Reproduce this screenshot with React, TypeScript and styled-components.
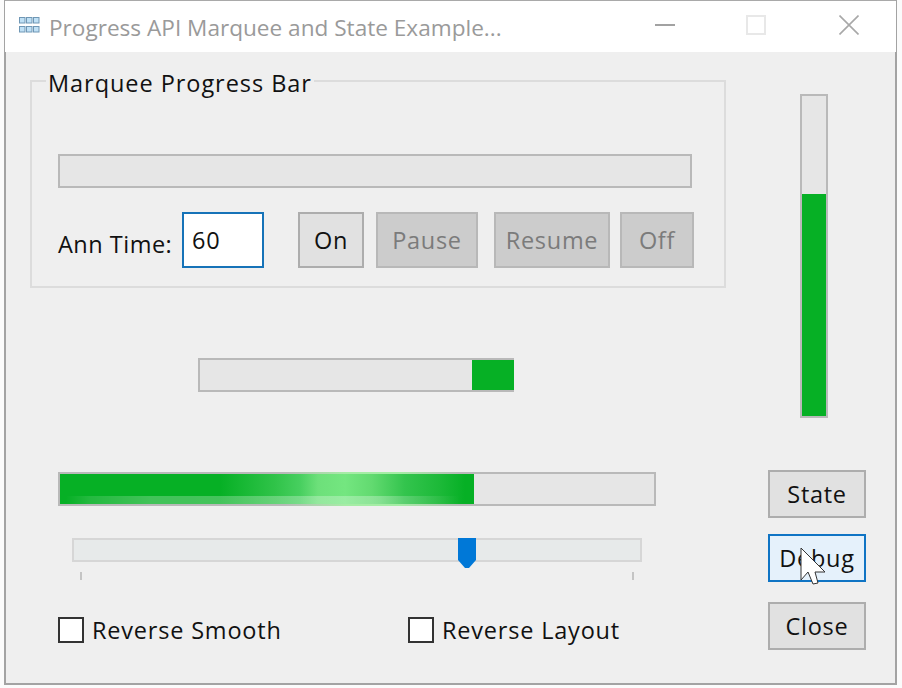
import React from "react";
import styled, { createGlobalStyle } from "styled-components";

const GlobalStyle = createGlobalStyle`
  html, body {
    margin: 0;
    padding: 0;
    background: #fbfbfb;
  }
  * {
    box-sizing: border-box;
  }
`;

const FONT = `"Open Sans", "Noto Sans", sans-serif`;

const Window = styled.div`
  width: 893px;
  height: 685px;
  margin-left: 4px;
  display: flex;
  flex-direction: column;
  font-family: ${FONT};
  font-size: 23.5px;
  letter-spacing: 0.7px;
  color: #111;
  background: #efefef;
  border-top: 1px solid #a9a9a9;
  border-bottom: 2px solid #a3a3a3;
  border-left: 2px solid #a3a3a3;
  border-right: 2px solid #a3a3a3;
`;

const TitleBar = styled.div`
  height: 51px;
  flex: none;
  display: flex;
  align-items: center;
  background: #fff;
  margin: 0 -1px 0 -1px;
  padding: 0 37px 3px 14px;
`;

const Title = styled.div`
  margin: 5px 0 0 9px;
  color: #9a9a9a;
  font-size: 22.6px;
  letter-spacing: 0;
  white-space: nowrap;
`;

const WindowControls = styled.div`
  margin-left: auto;
  display: flex;
  align-items: center;
  gap: 71px;
`;

const CloseGlyph = styled.svg`
  margin-left: 2px;
`;

const Body = styled.div`
  flex: 1;
  display: flex;
  padding: 28px 0 0 24px;
`;

const LeftColumn = styled.div`
  width: 696px;
  flex: none;
  display: flex;
  flex-direction: column;
`;

const RightColumn = styled.div`
  margin-left: 42px;
  width: 98px;
  display: flex;
  flex-direction: column;
  align-items: flex-start;
`;

const GroupBox = styled.section`
  width: 696px;
  height: 208px;
  flex: none;
  padding: 0 0 18px 26px;
  display: flex;
  flex-direction: column;
  justify-content: flex-end;
  gap: 24px;
  border: 2px solid #dcdcdc;
  position: relative;
`;

const GroupTitle = styled.span`
  position: absolute;
  left: 14px;
  top: -13px;
  padding: 0 2px;
  line-height: 28px;
  letter-spacing: 0.95px;
  white-space: nowrap;
  background: #efefef;
`;

const Track = styled.div<{ $w: number }>`
  width: ${(p) => p.$w}px;
  height: 34px;
  flex: none;
  display: flex;
  background: #e6e6e6;
  border: 2px solid #b9b9b9;
  position: relative;
`;

const ControlsRow = styled.div`
  display: flex;
  align-items: center;
`;

const FieldLabel = styled.span`
  margin-top: 8px;
  width: 124px;
  flex: none;
  letter-spacing: 0.5px;
  white-space: nowrap;
`;

const NumberBox = styled.div`
  width: 82px;
  height: 56px;
  flex: none;
  padding: 0 0 1px 8px;
  display: flex;
  align-items: center;
  background: #fff;
  border: 2px solid #1673b8;
`;

const Button = styled.button<{ $w: number; $ml?: number; $mt?: number; $off?: boolean; $hot?: boolean }>`
  width: ${(p) => p.$w}px;
  margin: ${(p) => p.$mt ?? 0}px 0 0 ${(p) => p.$ml ?? 0}px;
  padding: 0;
  flex: none;
  font: inherit;
  letter-spacing: inherit;
  position: relative;
  color: ${(p) => (p.$off ? "#7b7b7b" : "#111")};
  background: ${(p) => (p.$hot ? "#e5f1fb" : p.$off ? "#cccccc" : "#e1e1e1")};
  border: 2px solid ${(p) => (p.$hot ? "#0f74c4" : p.$off ? "#b8b8b8" : "#adadad")};
`;

const TallButton = styled(Button)`
  height: 56px;
`;

const SideButton = styled(Button)`
  height: 48px;
`;

const ElapsedFill = styled.div<{ $w: number }>`
  width: ${(p) => p.$w}px;
  background: #06b025;
`;

const MidTrack = styled(Track)`
  margin: 70px 0 0 168px;
  justify-content: flex-end;
  border-right: none;
`;

const LongTrack = styled(Track)`
  margin: 80px 0 0 28px;
`;

const LongFill = styled.div`
  width: 414px;
  height: 100%;
  background:
    linear-gradient(to right, rgba(255,255,255,0) 6px, rgba(255,255,255,0.12) 30px, rgba(255,255,255,0.24) 90px, rgba(255,255,255,0.28) 320px, rgba(255,255,255,0.1) 370px, rgba(255,255,255,0) 400px) bottom / 100% 8px no-repeat,
    linear-gradient(to right, #06b025 0, #06b025 160px, #30c349 215px, #47cf5f 240px, #6de07a 258px, #74e680 285px, #62da70 312px, #33c44d 345px, #1cb938 380px, #06b025 405px, #06b025 100%);
`;

const LongGlow = styled.span`
  position: absolute;
  left: 225px;
  width: 175px;
  top: -2px;
  bottom: -2px;
  pointer-events: none;
  border-top: 2px solid;
  border-bottom: 2px solid;
  border-image: linear-gradient(to right, rgba(150,235,150,0), #a5eda5 35%, #a5eda5 65%, rgba(150,235,150,0)) 1;
`;

const SliderArea = styled.div`
  margin: 32px 0 0 42px;
  width: 570px;
  display: flex;
  flex-direction: column;
`;

const SliderTrack = styled.div`
  height: 24px;
  background: #e7eaea;
  border: 2px solid #d6d6d6;
  position: relative;
`;

const SliderThumb = styled.svg`
  position: absolute;
  left: 384px;
  top: -2px;
`;

const Ticks = styled.div`
  margin-top: 10px;
  padding: 0 8px;
  display: flex;
  justify-content: space-between;
`;

const Tick = styled.span`
  width: 2px;
  height: 8px;
  background: #c4c4c4;
`;

const ChecksRow = styled.div`
  margin: 36px 0 0 28px;
  display: flex;
  align-items: center;
`;

const CheckLabel = styled.label<{ $w: number }>`
  width: ${(p) => p.$w}px;
  display: flex;
  align-items: center;
  gap: 8px;
  white-space: nowrap;
  line-height: 26px;
`;

const CheckText = styled.span`
  margin-top: 1px;
  letter-spacing: 0.8px;
`;

const Box = styled.span`
  width: 26px;
  height: 26px;
  flex: none;
  background: #fff;
  border: 2px solid #333;
`;

const VerticalTrack = styled.div`
  width: 28px;
  height: 324px;
  margin: 14px 0 52px 32px;
  display: flex;
  flex-direction: column;
  justify-content: flex-end;
  background: #e6e6e6;
  border: 2px solid #b9b9b9;
`;

const VerticalFill = styled.div<{ $pct: number }>`
  height: ${(p) => p.$pct}%;
  background: #06b025;
`;

const Cursor = styled.svg`
  position: absolute;
  left: 30px;
  top: 11px;
`;

const GridIcon = () => (
  <svg width="21" height="16" viewBox="0 0 21 16">
    {[0, 7, 14].flatMap((x) =>
      [0, 9].map((y) => (
        <rect key={`${x}-${y}`} x={x + 0.5} y={y + 0.5} width="5.5" height="5.5" fill="#bfe0f5" stroke="#6f97b5" />
      ))
    )}
  </svg>
);

export default function App() {
  return (
    <>
      <GlobalStyle />
      <Window>
        <TitleBar>
          <GridIcon />
          <Title>Progress API Marquee and State Example...</Title>
          <WindowControls>
            <svg width="20" height="20" viewBox="0 0 20 20">
              <rect x="0" y="9" width="20" height="2" fill="#a2a2a2" />
            </svg>
            <svg width="20" height="20" viewBox="0 0 20 20">
              <rect x="1" y="1" width="18" height="18" fill="none" stroke="#e8e8e8" strokeWidth="2" />
            </svg>
            <CloseGlyph width="20" height="20" viewBox="0 0 20 20">
              <path d="M0.5 0.5 L19.5 19.5 M19.5 0.5 L0.5 19.5" stroke="#a8a8a8" strokeWidth="1.6" fill="none" />
            </CloseGlyph>
          </WindowControls>
        </TitleBar>
        <Body>
          <LeftColumn>
            <GroupBox>
              <GroupTitle>Marquee Progress Bar</GroupTitle>
              <Track $w={634} />
              <ControlsRow>
                <FieldLabel>Ann Time:</FieldLabel>
                <NumberBox>60</NumberBox>
                <TallButton $w={66} $ml={34}>On</TallButton>
                <TallButton $w={102} $ml={12} $off>Pause</TallButton>
                <TallButton $w={116} $ml={16} $off>Resume</TallButton>
                <TallButton $w={74} $ml={10} $off>Off</TallButton>
              </ControlsRow>
            </GroupBox>
            <MidTrack $w={316}>
              <ElapsedFill $w={42} />
            </MidTrack>
            <LongTrack $w={598}>
              <LongFill />
              <LongGlow />
            </LongTrack>
            <SliderArea>
              <SliderTrack>
                <SliderThumb width="18" height="30" viewBox="0 0 18 30">
                  <path d="M0 0 H18 V22 L11 30 H7 L0 22 Z" fill="#0078d7" />
                </SliderThumb>
              </SliderTrack>
              <Ticks>
                <Tick />
                <Tick />
              </Ticks>
            </SliderArea>
            <ChecksRow>
              <CheckLabel $w={350}>
                <Box />
                <CheckText>Reverse Smooth</CheckText>
              </CheckLabel>
              <CheckLabel $w={240}>
                <Box />
                <CheckText>Reverse Layout</CheckText>
              </CheckLabel>
            </ChecksRow>
          </LeftColumn>
          <RightColumn>
            <VerticalTrack>
              <VerticalFill $pct={69.4} />
            </VerticalTrack>
            <SideButton $w={98}>State</SideButton>
            <SideButton $w={98} $mt={16} $hot>
              Debug
              <Cursor width="26" height="38" viewBox="0 0 26 38">
                <path d="M1 1 L1 33 L8 25 L13 37 L18 36 L15 25 L25 25 Z" fill="#fff" stroke="#333" strokeWidth="1" />
              </Cursor>
            </SideButton>
            <SideButton $w={98} $mt={20}>Close</SideButton>
          </RightColumn>
        </Body>
      </Window>
    </>
  );
}
